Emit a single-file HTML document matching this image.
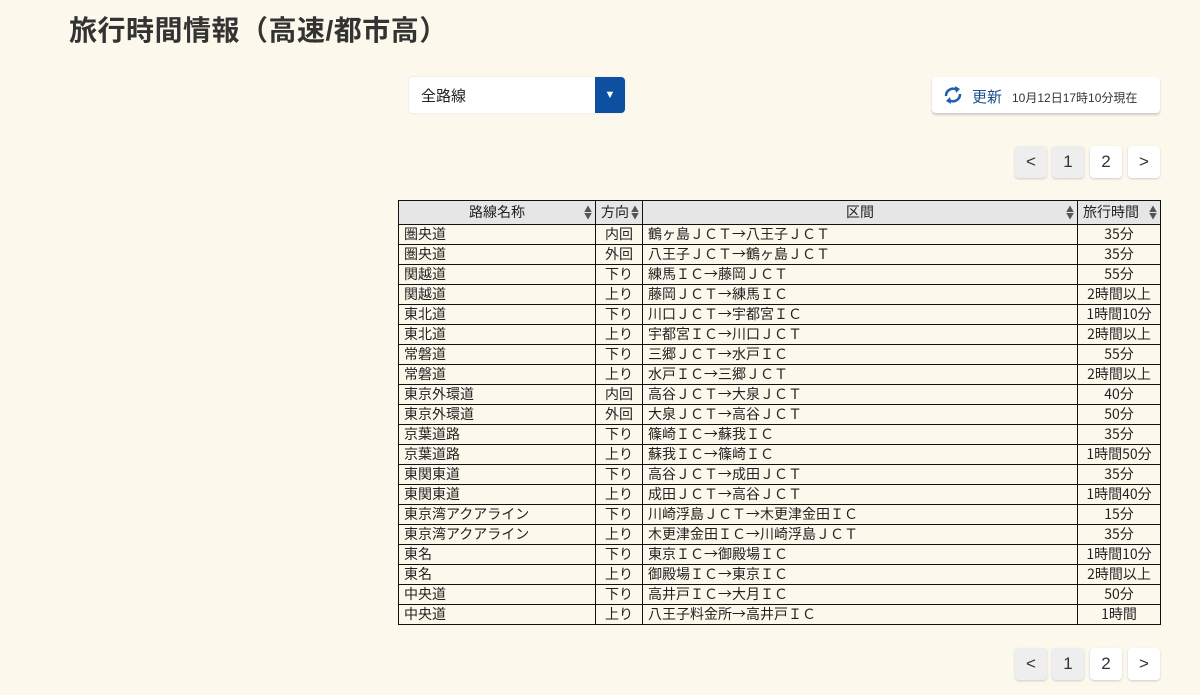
<!DOCTYPE html>
<html><head><meta charset="utf-8"><style>
body{margin:0;background:#fdf8ec;font-family:"Liberation Sans","Noto Sans CJK JP",sans-serif;color:#222;width:1200px;height:695px;overflow:hidden;position:relative}
h1{position:absolute;left:69px;top:9px;margin:0;font-size:28px;font-weight:bold;color:#333;letter-spacing:0.5px}
.sel{position:absolute;left:409px;top:77px;width:216px;height:36px;background:#fff;border-radius:4px;box-shadow:0 0 2px #ddd}
.sel span{position:absolute;left:12px;top:8px;font-size:15px}
.sel b{position:absolute;right:0;top:0;width:30px;height:36px;background:#0d4fa0;border-radius:0 4px 4px 0;color:#fff;font-size:11px;text-align:center;line-height:36px}
.upd{position:absolute;left:932px;top:77px;width:228px;height:36px;background:#fff;border-radius:4px;box-shadow:0 2px 2px #ccc}
.upd .t{position:absolute;left:40px;top:9px;font-size:15px;color:#1d4f8e}
.upd .d{position:absolute;left:80px;top:12px;font-size:12px;color:#333}
.pg{position:absolute;height:32px}
.pg div{position:absolute;top:0;width:32px;height:32px;border-radius:4px;background:#fff;box-shadow:0 1px 2px #ccc;text-align:center;line-height:32px;font-size:17px;color:#333}
.pg .g{background:#eee}
table{position:absolute;left:398px;top:200px;border-collapse:collapse;font-size:14px;width:763px;font-family:"Noto Sans CJK JP",sans-serif}
td,th{border:1.5px solid #111;height:19px;padding:0 5px;line-height:18px;white-space:nowrap}
th{background:#e6e6e6;font-weight:normal;height:22.5px;position:relative}
th i{position:absolute;right:3px;top:5px;font-style:normal;font-size:8px;line-height:7px;color:#555}
.c{text-align:center}
</style></head><body>
<h1>旅行時間情報（高速/都市高）</h1>
<div class="sel"><span>全路線</span><b>▼</b></div>
<div class="upd"><svg style="position:absolute;left:10px;top:7px" width="22" height="22" viewBox="0 0 22 22"><path d="M4 12a7 7 0 0 1 11-6" fill="none" stroke="#1d5fae" stroke-width="2.5"/><path d="M13 2l5 3-4 4z" fill="#1d5fae"/><path d="M18 10a7 7 0 0 1-11 6" fill="none" stroke="#1d5fae" stroke-width="2.5"/><path d="M9 20l-5-3 4-4z" fill="#1d5fae"/></svg><span class="t">更新</span><span class="d">10月12日17時10分現在</span></div>
<div class="pg" style="left:1015px;top:146px"><div class="g" style="left:0">&lt;</div><div class="g" style="left:37px">1</div><div style="left:75px">2</div><div style="left:113px">&gt;</div></div>
<div class="pg" style="left:1015px;top:648px"><div class="g" style="left:0">&lt;</div><div class="g" style="left:37px">1</div><div style="left:75px">2</div><div style="left:113px">&gt;</div></div>
<table>
<tr><th style="width:186px">路線名称<i>▲<br>▼</i></th><th style="width:36px;text-align:left">方向<i>▲<br>▼</i></th><th>区間<i>▲<br>▼</i></th><th style="width:72px;text-align:left">旅行時間<i>▲<br>▼</i></th></tr>
<tr><td>圏央道</td><td class="c">内回</td><td>鶴ヶ島ＪＣＴ→八王子ＪＣＴ</td><td class="c">35分</td></tr>
<tr><td>圏央道</td><td class="c">外回</td><td>八王子ＪＣＴ→鶴ヶ島ＪＣＴ</td><td class="c">35分</td></tr>
<tr><td>関越道</td><td class="c">下り</td><td>練馬ＩＣ→藤岡ＪＣＴ</td><td class="c">55分</td></tr>
<tr><td>関越道</td><td class="c">上り</td><td>藤岡ＪＣＴ→練馬ＩＣ</td><td class="c">2時間以上</td></tr>
<tr><td>東北道</td><td class="c">下り</td><td>川口ＪＣＴ→宇都宮ＩＣ</td><td class="c">1時間10分</td></tr>
<tr><td>東北道</td><td class="c">上り</td><td>宇都宮ＩＣ→川口ＪＣＴ</td><td class="c">2時間以上</td></tr>
<tr><td>常磐道</td><td class="c">下り</td><td>三郷ＪＣＴ→水戸ＩＣ</td><td class="c">55分</td></tr>
<tr><td>常磐道</td><td class="c">上り</td><td>水戸ＩＣ→三郷ＪＣＴ</td><td class="c">2時間以上</td></tr>
<tr><td>東京外環道</td><td class="c">内回</td><td>高谷ＪＣＴ→大泉ＪＣＴ</td><td class="c">40分</td></tr>
<tr><td>東京外環道</td><td class="c">外回</td><td>大泉ＪＣＴ→高谷ＪＣＴ</td><td class="c">50分</td></tr>
<tr><td>京葉道路</td><td class="c">下り</td><td>篠崎ＩＣ→蘇我ＩＣ</td><td class="c">35分</td></tr>
<tr><td>京葉道路</td><td class="c">上り</td><td>蘇我ＩＣ→篠崎ＩＣ</td><td class="c">1時間50分</td></tr>
<tr><td>東関東道</td><td class="c">下り</td><td>高谷ＪＣＴ→成田ＪＣＴ</td><td class="c">35分</td></tr>
<tr><td>東関東道</td><td class="c">上り</td><td>成田ＪＣＴ→高谷ＪＣＴ</td><td class="c">1時間40分</td></tr>
<tr><td>東京湾アクアライン</td><td class="c">下り</td><td>川崎浮島ＪＣＴ→木更津金田ＩＣ</td><td class="c">15分</td></tr>
<tr><td>東京湾アクアライン</td><td class="c">上り</td><td>木更津金田ＩＣ→川崎浮島ＪＣＴ</td><td class="c">35分</td></tr>
<tr><td>東名</td><td class="c">下り</td><td>東京ＩＣ→御殿場ＩＣ</td><td class="c">1時間10分</td></tr>
<tr><td>東名</td><td class="c">上り</td><td>御殿場ＩＣ→東京ＩＣ</td><td class="c">2時間以上</td></tr>
<tr><td>中央道</td><td class="c">下り</td><td>高井戸ＩＣ→大月ＩＣ</td><td class="c">50分</td></tr>
<tr><td>中央道</td><td class="c">上り</td><td>八王子料金所→高井戸ＩＣ</td><td class="c">1時間</td></tr>
</table>
</body></html>
